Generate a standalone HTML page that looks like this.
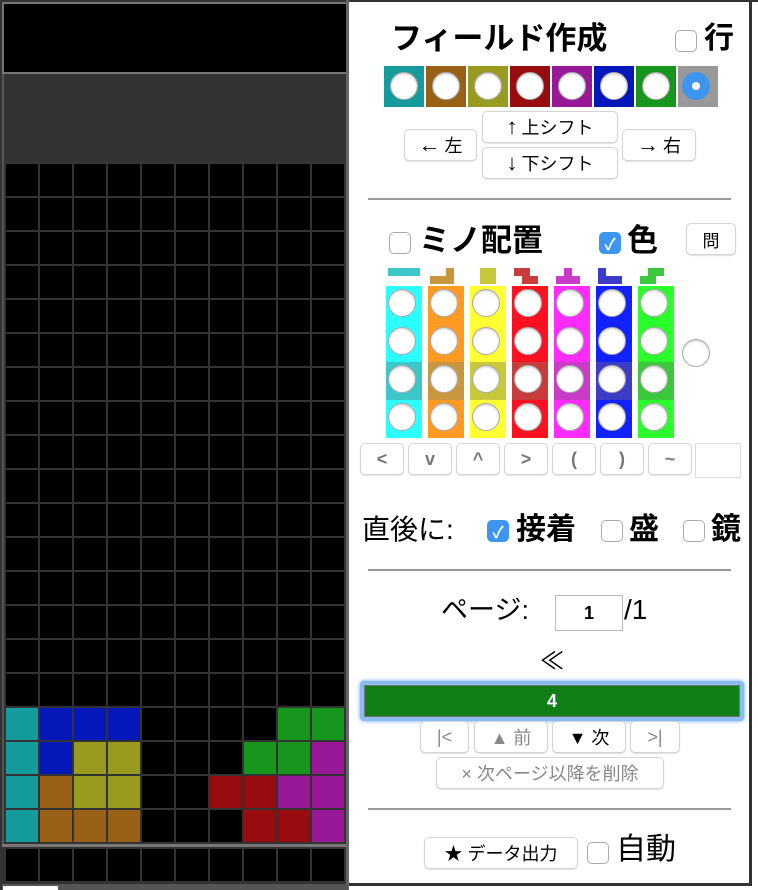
<!DOCTYPE html>
<html><head><meta charset="utf-8"><style>
*{box-sizing:border-box;margin:0;padding:0}
body{width:758px;height:890px;background:#fff;position:relative;overflow:hidden;font-family:"Liberation Sans","Noto Sans CJK JP",sans-serif;color:#000}
.a{position:absolute}
.cell{position:absolute;width:32px;height:32px;background:#000}
.btn{position:absolute;background:#fff;border:1px solid #d4d4d4;border-radius:5px;box-shadow:0 1px 1px rgba(0,0,0,.12);font-size:18px;display:flex;align-items:center;justify-content:center;white-space:nowrap}
.cb{position:absolute;width:22px;height:22px;border:1px solid #aaa;border-radius:5px;background:#fff}
.cbk{position:absolute;width:22px;height:22px;border-radius:5px;background:#3d95f0;color:#fff;font-size:16px;font-weight:bold;display:flex;align-items:center;justify-content:center}
.rd{position:absolute;width:28px;height:28px;border-radius:50%;background:#fff;border:1px solid #aaa;box-shadow:inset 0 1px 2px rgba(0,0,0,.2)}
.hr{position:absolute;left:368px;width:363px;height:2px;background:#999}
.b{font-weight:bold}
.ar{font-size:22px;margin-right:4px}
</style></head><body>
<div class="a" style="left:0;top:0;width:349px;height:890px;background:#333"></div>
<div class="a" style="left:0;top:0;width:758px;height:2px;background:#333"></div>
<div class="a" style="left:2px;top:2px;width:346px;height:72px;background:#000;border:2px solid #777"></div>
<div class="a" style="left:2px;top:74px;width:346px;height:771px;border-right:2px solid #777;border-left:2px solid #555"></div>
<div class="a" style="left:2px;top:844px;width:346px;height:3px;background:#777"></div>
<div class="a" style="left:346px;top:0;width:3px;height:890px;background:#666"></div>
<div class="a" style="left:2px;top:884px;width:346px;height:6px;background:#555"></div>
<div class="a" style="left:3px;top:886px;width:55px;height:4px;background:#fff"></div>
<div class="a" style="left:749px;top:0;width:3px;height:886px;background:#333"></div>
<div class="a" style="left:349px;top:883px;width:403px;height:3px;background:#333"></div>
<div id="g"></div>
<script>
var cols={c:'#159b9b',o:'#986116',y:'#999a20',r:'#980b0e',m:'#981898',b:'#0417b9',g:'#16961c'};
var rows={16:'cbbb....gg',17:'cbyy...ggm',18:'coyy..rrmm',19:'cooo...rrm'};
var h='';
for(var r=0;r<20;r++)for(var c=0;c<10;c++){var k=(rows[r]||'..........')[c];h+='<div class="cell" style="left:'+(6+34*c)+'px;top:'+(164+34*r)+'px;background:'+(cols[k]||'#000')+'"></div>';}
for(var c=0;c<10;c++)h+='<div class="cell" style="left:'+(6+34*c)+'px;top:849px"></div>';
var sw=['#159b9b','#986116','#999a20','#980b0e','#981898','#0417b9','#16961c','#999'];
for(var i=0;i<8;i++){h+='<div class="a" style="left:'+(384+42*i)+'px;top:66px;width:40px;height:41px;background:'+sw[i]+'"></div>';
h+= i<7?'<div class="rd" style="left:'+(390+42*i)+'px;top:72px"></div>':'<div class="a" style="left:682px;top:72px;width:28px;height:28px;border-radius:50%;background:#3d95f0"><div class="a" style="left:10px;top:10px;width:8px;height:8px;border-radius:50%;background:#fff"></div></div>';}
var lc=['#2bffff','#ff9a22','#ffff33','#ff1122','#ff2bff','#1122ff','#2bff2b'];
var dc=['#3cc8c8','#c8963c','#c8c83c','#c83c3c','#c83cc8','#3c3cc8','#3cc83c'];
for(var i=0;i<7;i++){var x=386+42*i;
h+='<div class="a" style="left:'+x+'px;top:286px;width:36px;height:152px;background:'+lc[i]+'"></div>';
h+='<div class="a" style="left:'+x+'px;top:362px;width:36px;height:38px;background:'+dc[i]+'"></div>';
for(var j=0;j<4;j++)h+='<div class="rd" style="left:'+(x+2)+'px;top:'+(289+38*j)+'px"></div>';}
document.getElementById('g').innerHTML=h;
</script>
<svg class="a" style="left:380px;top:260px" width="300" height="30">
<rect x="8" y="8" width="32" height="8" fill="#3cc8c8"/>
<path d="M50 16h16v-8h8v16h-24z" fill="#c8963c"/>
<rect x="100" y="8" width="16" height="16" fill="#c8c83c"/>
<path d="M134 8h16v8h8v8h-16v-8h-8z" fill="#c83c3c"/>
<path d="M184 8h8v8h8v8h-24v-8h8z" fill="#c83cc8"/>
<path d="M218 8h8v8h16v8h-24z" fill="#3c3cc8"/>
<path d="M268 8h16v8h-8v8h-16v-8h8z" fill="#3cc83c"/>
</svg>
<div class="a b" style="left:391px;top:19px;font-size:31px;line-height:40px">フィールド作成</div>
<div class="cb" style="left:675px;top:30px"></div>
<div class="a b" style="left:704px;top:19px;font-size:30px;line-height:40px">行</div>
<div class="btn" style="left:404px;top:129px;width:73px;height:32px"><span class="ar">←</span>左</div>
<div class="btn" style="left:482px;top:111px;width:136px;height:32px"><span class="ar">↑</span>上シフト</div>
<div class="btn" style="left:482px;top:147px;width:136px;height:32px"><span class="ar">↓</span>下シフト</div>
<div class="btn" style="left:622px;top:129px;width:74px;height:32px"><span class="ar">→</span>右</div>
<div class="hr" style="top:198px"></div>
<div class="cb" style="left:389px;top:232px"></div>
<div class="a b" style="left:419px;top:221px;font-size:31px;line-height:40px">ミノ配置</div>
<div class="cbk" style="left:599px;top:232px">✓</div>
<div class="a b" style="left:627px;top:221px;font-size:31px;line-height:40px">色</div>
<div class="btn" style="left:686px;top:223px;width:50px;height:32px;font-size:17px">問</div>
<div class="rd" style="left:682px;top:339px"></div>
<div id="k"></div>
<script>
var s=['&lt;','v','^','&gt;','(',')','~'],h='';
for(var i=0;i<7;i++)h+='<div class="btn" style="left:'+(360+48*i)+'px;top:443px;width:44px;height:32px;color:#777;font-size:18px;font-weight:bold">'+s[i]+'</div>';
document.getElementById('k').innerHTML=h;
</script>
<div class="a" style="left:695px;top:443px;width:46px;height:35px;border:1px solid #ddd"></div>
<div class="a" style="left:362px;top:510px;font-size:28px;line-height:40px">直後に:</div>
<div class="cbk" style="left:487px;top:520px">✓</div>
<div class="a b" style="left:516px;top:510px;font-size:30px;line-height:40px">接着</div>
<div class="cb" style="left:601px;top:520px"></div>
<div class="a b" style="left:629px;top:510px;font-size:30px;line-height:40px">盛</div>
<div class="cb" style="left:683px;top:520px"></div>
<div class="a b" style="left:711px;top:510px;font-size:30px;line-height:40px">鏡</div>
<div class="hr" style="top:569px"></div>
<div class="a" style="left:441px;top:592px;font-size:27px;line-height:36px">ページ:</div>
<div class="a b" style="left:555px;top:595px;width:68px;height:36px;border:1px solid #bbb;font-size:18px;display:flex;align-items:center;justify-content:center">1</div>
<div class="a" style="left:624px;top:592px;font-size:28px;line-height:36px">/1</div>
<div class="a" style="left:540px;top:648px;font-size:24px;line-height:28px">≪</div>
<div class="a" style="left:360px;top:681px;width:384px;height:40px;border-radius:4px;background:#8bbcf0;box-shadow:0 0 4px #5fa0f0"></div>
<div class="a b" style="left:364px;top:685px;width:376px;height:32px;background:#127e17;border:1px solid #777;color:#fff;font-size:18px;display:flex;align-items:center;justify-content:center">4</div>
<div class="btn" style="left:420px;top:721px;width:49px;height:32px;color:#888">|&lt;</div>
<div class="btn" style="left:474px;top:721px;width:74px;height:32px;color:#888">▲ 前</div>
<div class="btn" style="left:552px;top:721px;width:74px;height:32px">▼ 次</div>
<div class="btn" style="left:630px;top:721px;width:50px;height:32px;color:#888">&gt;|</div>
<div class="btn" style="left:436px;top:757px;width:228px;height:32px;color:#888;font-size:18px">× 次ページ以降を削除</div>
<div class="hr" style="top:808px"></div>
<div class="btn" style="left:424px;top:837px;width:154px;height:32px">★ データ出力</div>
<div class="cb" style="left:587px;top:842px"></div>
<div class="a" style="left:616px;top:830px;font-size:30px;line-height:40px">自動</div>
</body></html>
